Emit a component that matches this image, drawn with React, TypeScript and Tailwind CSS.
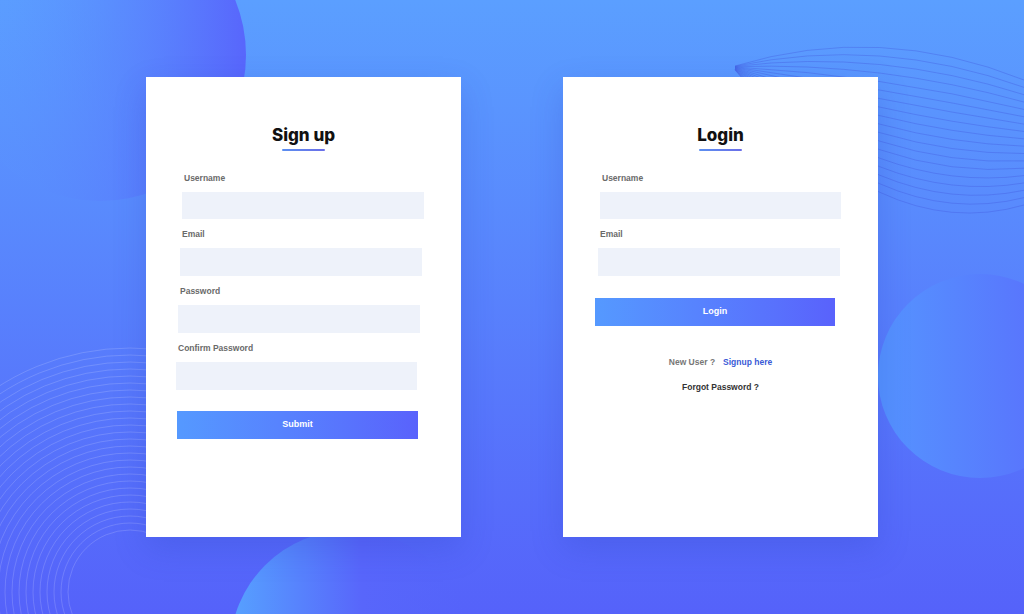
import React from "react";

const labelCls =
  "block text-[8.5px] leading-[12px] font-bold text-[#6a6a6a] [font-family:'Liberation_Sans',Arial,sans-serif]";
const inputCls = "block h-[27px] bg-[#eef2fa] border-0 outline-none";
const btnCls =
  "flex items-center justify-center h-[28px] bg-gradient-to-r from-[#5599ff] to-[#5962fc] text-white text-[9px] font-bold [font-family:'Liberation_Sans',Arial,sans-serif]";

function Field({
  label,
  labelMl,
  inputMl,
  width,
  first,
}: {
  label: string;
  labelMl: string;
  inputMl: string;
  width: string;
  first?: boolean;
}) {
  return (
    <div className={first ? "mt-[21px]" : "mt-[9px]"}>
      <span className={`${labelCls} ${labelMl}`}>{label}</span>
      <div className={`${inputCls} ${inputMl} ${width} mt-[8px]`} />
    </div>
  );
}

function Title({ text }: { text: string }) {
  return (
    <div className="flex flex-col items-center pt-[46px]">
      <h1 className="text-[17px] leading-[24px] font-extrabold text-[#111] [font-family:Inter,'Noto_Sans',sans-serif]">
        {text}
      </h1>
      <div className="mt-[2px] h-[2px] w-[43px] rounded-full bg-gradient-to-r from-[#5b8ff0] to-[#6a6ee8]" />
    </div>
  );
}

function Background() {
  const arcs = [];
  for (let i = 0; i < 27; i++) {
    arcs.push(
      <circle
        key={i}
        cx={130}
        cy={592}
        r={62 + i * 7}
        fill="none"
        stroke="#ffffff"
        strokeOpacity={0.2}
        strokeWidth={0.8}
      />
    );
  }
  const waves = [];
  for (let i = 0; i < 18; i++) {
    const t = i / 17;
    const cy = 22 + 225 * t;
    const y2 = 80 + 125 * t;
    waves.push(
      <path
        key={i}
        d={`M 735 ${66 + t * 4} Q 880 ${cy} 1024 ${y2}`}
        fill="none"
        stroke="#4259e0"
        strokeOpacity={0.42}
        strokeWidth={0.9}
      />
    );
  }
  return (
    <svg
      className="absolute inset-0 h-full w-full"
      viewBox="0 0 1024 614"
      preserveAspectRatio="none"
    >
      <defs>
        <linearGradient id="bg" x1="0" y1="0" x2="0" y2="1">
          <stop offset="0" stopColor="#5b9fff" />
          <stop offset="1" stopColor="#5562fa" />
        </linearGradient>
        <linearGradient id="blobL" x1="0" y1="0" x2="1" y2="0">
          <stop offset="0" stopColor="#5a9cff" stopOpacity="0" />
          <stop offset="1" stopColor="#5866fc" />
        </linearGradient>
        <linearGradient id="blobR" x1="0" y1="0" x2="1" y2="0">
          <stop offset="0" stopColor="#5594ff" />
          <stop offset="1" stopColor="#5a6bfc" />
        </linearGradient>
        <linearGradient id="blobB" x1="0" y1="0" x2="1" y2="0">
          <stop offset="0" stopColor="#56a2ff" />
          <stop offset="0.55" stopColor="#5866fb" />
          <stop offset="1" stopColor="#5566fa" stopOpacity="0" />
        </linearGradient>
        <clipPath id="arcClip">
          <rect x="0" y="0" width="146" height="614" />
        </clipPath>
      </defs>
      <rect x="0" y="0" width="1024" height="614" fill="url(#bg)" />
      <circle cx="100" cy="55" r="146" fill="url(#blobL)" />
      <circle cx="980" cy="376" r="102" fill="url(#blobR)" />
      <circle cx="350" cy="650" r="120" fill="url(#blobB)" />
      <g clipPath="url(#arcClip)">{arcs}</g>
      {waves}
    </svg>
  );
}

export default function App() {
  return (
    <div className="relative h-[614px] w-[1024px] overflow-hidden">
      <Background />
      <div className="relative flex h-full items-center justify-center gap-[102px]">
        {/* Sign up card */}
        <div className="h-[460px] w-[315px] bg-white shadow-[0_12px_30px_rgba(40,60,190,0.22)]">
          <Title text="Sign up" />
          <Field first label="Username" labelMl="ml-[38px]" inputMl="ml-[36px]" width="w-[242px]" />
          <Field label="Email" labelMl="ml-[36px]" inputMl="ml-[34px]" width="w-[242px] !h-[28px]" />
          <Field label="Password" labelMl="ml-[34px]" inputMl="ml-[32px]" width="w-[242px] !h-[28px]" />
          <Field label="Confirm Password" labelMl="ml-[32px]" inputMl="ml-[30px]" width="w-[241px] !h-[28px]" />
          <button className={`${btnCls} ml-[31px] mt-[21px] w-[241px]`}>Submit</button>
        </div>

        {/* Login card */}
        <div className="h-[460px] w-[315px] bg-white shadow-[0_12px_30px_rgba(40,60,190,0.22)]">
          <Title text="Login" />
          <Field first label="Username" labelMl="ml-[39px]" inputMl="ml-[37px]" width="w-[241px]" />
          <Field label="Email" labelMl="ml-[37px]" inputMl="ml-[35px]" width="w-[242px] !h-[28px]" />
          <button className={`${btnCls} ml-[32px] mt-[22px] w-[240px]`}>Login</button>
          <div className="mt-[30px] flex justify-center gap-[8px] text-[8.5px] leading-[12px] font-bold [font-family:'Liberation_Sans',Arial,sans-serif]">
            <span className="text-[#777]">New User ?</span>
            <span className="text-[#3a5ad6]">Signup here</span>
          </div>
          <div className="mt-[13px] text-center text-[8.5px] leading-[12px] font-bold text-[#333] [font-family:'Liberation_Sans',Arial,sans-serif]">
            Forgot Password ?
          </div>
        </div>
      </div>
    </div>
  );
}
